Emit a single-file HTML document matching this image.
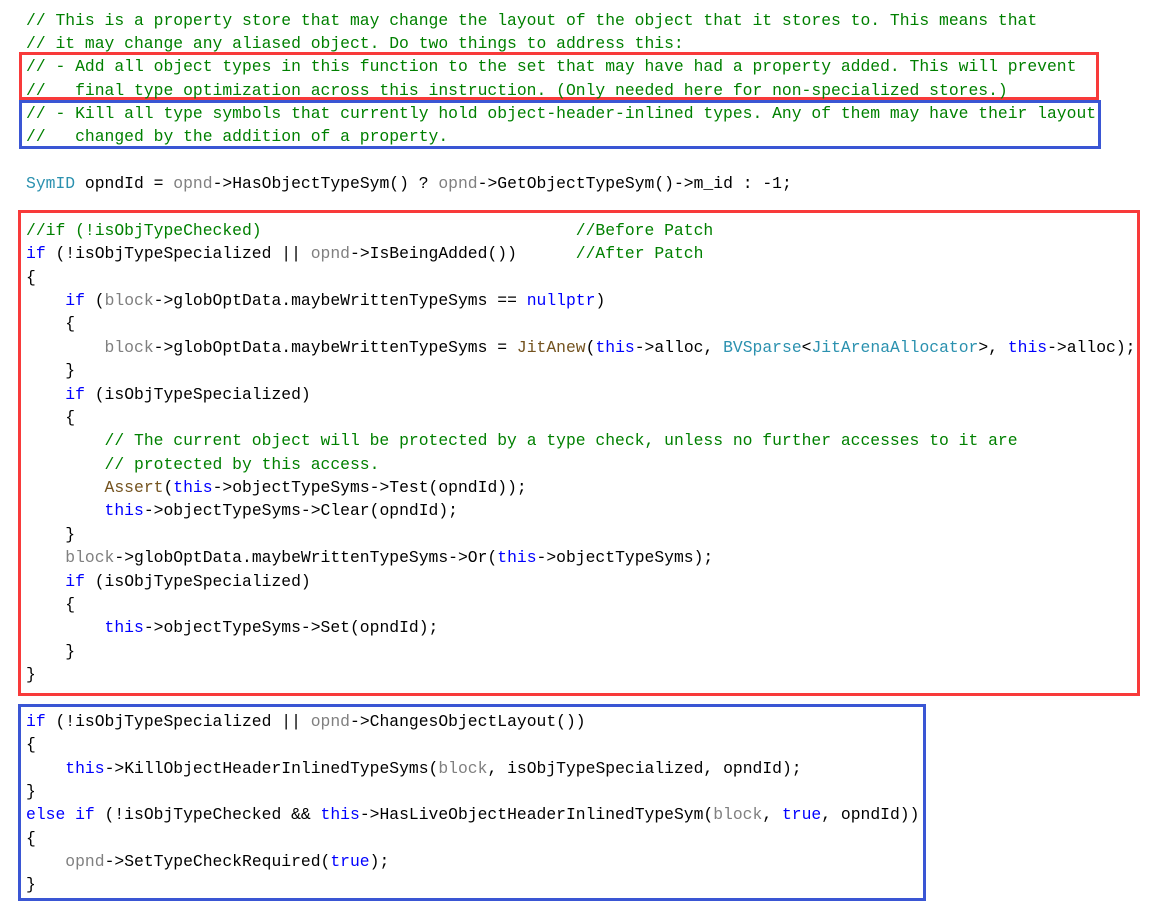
<!DOCTYPE html>
<html><head><meta charset="utf-8"><style>
html,body{margin:0;padding:0;background:#fff;width:1164px;height:914px;overflow:hidden;position:relative}
pre{position:absolute;left:26px;top:8.5px;margin:0;font-family:"Liberation Mono",monospace;font-size:16.38px;line-height:23.37px;color:#000;white-space:pre}
.c{color:#008000}.k{color:#0000ff}.t{color:#2b91af}.g{color:#808080}.f{color:#74531f}
.b{position:absolute;box-sizing:border-box;border:3px solid}
.r{border-color:#f83a3a}.u{border-color:#3a56d4}
</style></head><body>
<div class="b r" style="left:19px;top:52px;width:1080px;height:48px"></div>
<div class="b u" style="left:19px;top:100px;width:1082px;height:49px"></div>
<div class="b r" style="left:18px;top:210px;width:1122px;height:486px"></div>
<div class="b u" style="left:18px;top:704px;width:908px;height:197px"></div>
<pre><span class="c">// This is a property store that may change the layout of the object that it stores to. This means that
// it may change any aliased object. Do two things to address this:
// - Add all object types in this function to the set that may have had a property added. This will prevent
//   final type optimization across this instruction. (Only needed here for non-specialized stores.)
// - Kill all type symbols that currently hold object-header-inlined types. Any of them may have their layout
//   changed by the addition of a property.</span>

<span class="t">SymID</span> opndId = <span class="g">opnd</span>-&gt;HasObjectTypeSym() ? <span class="g">opnd</span>-&gt;GetObjectTypeSym()-&gt;m_id : -1;

<span class="c">//if (!isObjTypeChecked)                                //Before Patch</span>
<span class="k">if</span> (!isObjTypeSpecialized || <span class="g">opnd</span>-&gt;IsBeingAdded())      <span class="c">//After Patch</span>
{
    <span class="k">if</span> (<span class="g">block</span>-&gt;globOptData.maybeWrittenTypeSyms == <span class="k">nullptr</span>)
    {
        <span class="g">block</span>-&gt;globOptData.maybeWrittenTypeSyms = <span class="f">JitAnew</span>(<span class="k">this</span>-&gt;alloc, <span class="t">BVSparse</span>&lt;<span class="t">JitArenaAllocator</span>&gt;, <span class="k">this</span>-&gt;alloc);
    }
    <span class="k">if</span> (isObjTypeSpecialized)
    {
        <span class="c">// The current object will be protected by a type check, unless no further accesses to it are
        // protected by this access.</span>
        <span class="f">Assert</span>(<span class="k">this</span>-&gt;objectTypeSyms-&gt;Test(opndId));
        <span class="k">this</span>-&gt;objectTypeSyms-&gt;Clear(opndId);
    }
    <span class="g">block</span>-&gt;globOptData.maybeWrittenTypeSyms-&gt;Or(<span class="k">this</span>-&gt;objectTypeSyms);
    <span class="k">if</span> (isObjTypeSpecialized)
    {
        <span class="k">this</span>-&gt;objectTypeSyms-&gt;Set(opndId);
    }
}

<span class="k">if</span> (!isObjTypeSpecialized || <span class="g">opnd</span>-&gt;ChangesObjectLayout())
{
    <span class="k">this</span>-&gt;KillObjectHeaderInlinedTypeSyms(<span class="g">block</span>, isObjTypeSpecialized, opndId);
}
<span class="k">else if</span> (!isObjTypeChecked &amp;&amp; <span class="k">this</span>-&gt;HasLiveObjectHeaderInlinedTypeSym(<span class="g">block</span>, <span class="k">true</span>, opndId))
{
    <span class="g">opnd</span>-&gt;SetTypeCheckRequired(<span class="k">true</span>);
}</pre>
</body></html>
